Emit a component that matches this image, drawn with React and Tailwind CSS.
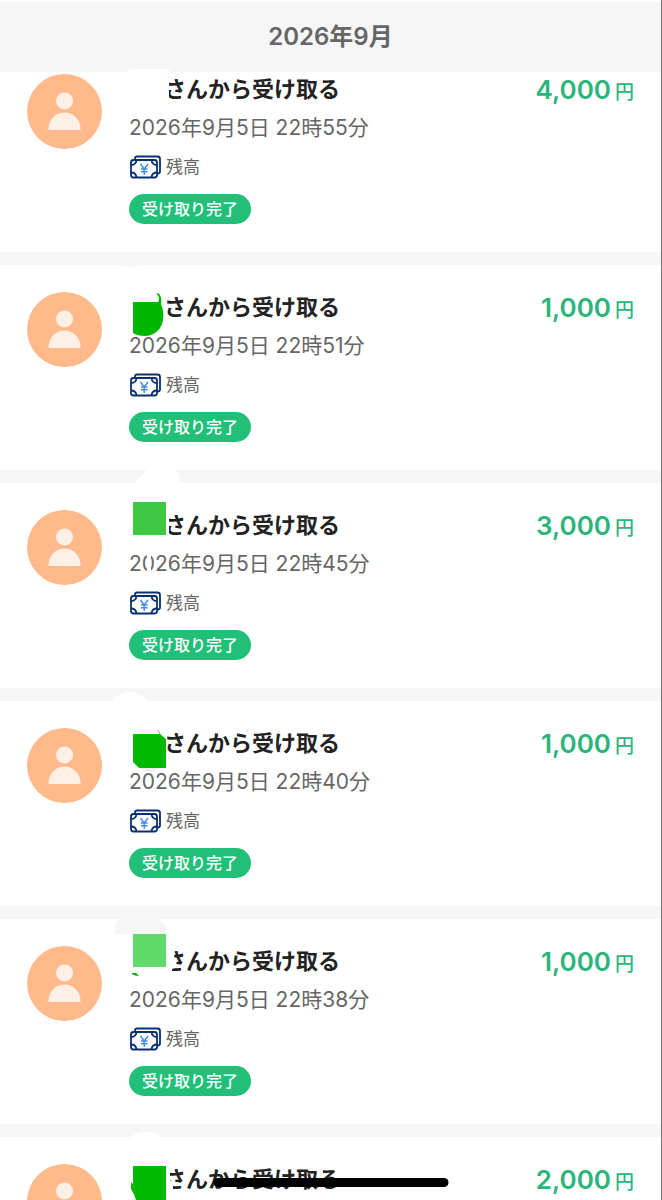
const transactions = [
  { id: 1, date: "2026年9月5日 22時55分", amount: "4,000" },
  { id: 2, date: "2026年9月5日 22時51分", amount: "1,000" },
  { id: 3, date: "2026年9月5日 22時45分", amount: "3,000" },
  { id: 4, date: "2026年9月5日 22時40分", amount: "1,000" },
  { id: 5, date: "2026年9月5日 22時38分", amount: "1,000" },
  { id: 6, date: "2026年9月5日 22時31分", amount: "2,000" },
];

// Marks that hide the sender's name, one drawing per row
const nameMasks = {
  1: (
    <g fill="#fff">
      <path d="M18 46 V43 Q20 42 26 42 H56 Q60 42 60 46Z" />
      <rect x="50" y="49" width="9" height="28" />
    </g>
  ),
  2: (
    <>
      <path d="M9 20 H31 Q28 23 20 23 Q12 23 9 20Z" fill="#f9f9f9" />
      <path
        d="M23 57 H48 C50 54 49 51 46 48 C51 48 52 54 51 59 C54 65 54 74 52 79 C49 87 42 91 35 91 C30 91 26 90 23 88Z"
        fill="#00b500"
      />
    </>
  ),
  3: (
    <>
      <path d="M24 20 C32 16 34 2 49 3 C64 1 72 10 69 20Z" fill="#fff" />
      <rect x="50" y="48" width="9" height="28" fill="#fff" />
      <rect x="23" y="39" width="33" height="33" fill="#3ec740" />
      <path d="M37 92 H41 V111 H37Z" fill="#fff" />
    </>
  ),
  4: (
    <>
      <path d="M2 20 C9 12 14 11 20 11 C28 11 33 15 38 20Z" fill="#fff" />
      <path d="M29 86 H49 Q46 91 39 91 Q32 90 29 86Z" fill="#eee" />
      <path d="M48 49 L50 53" stroke="#999" />
      <path d="M23 53 H50 L56 58 V87 H29 L23 81Z" fill="#00b800" />
    </>
  ),
  5: (
    <>
      <path d="M5 35 V27 Q7 20 13 20 H47 Q57 24 57 35Z" fill="#f6f6f6" />
      <path d="M50 48 H62 L65 60 L67 62 L65 69 L62 70 V77 H50Z" fill="#fff" />
      <rect x="23" y="35" width="33" height="33" fill="#60da6a" />
      <path d="M22 74 H26 L29 77 Q25 77 22 75Z" fill="#0aa30a" />
    </>
  ),
  6: (
    <>
      <path d="M21 20 Q28 15 36 15 Q45 15 50 20Z" fill="#fff" />
      <path d="M50 48 H60 V63 L63 65 V76 H50Z" fill="#fff" />
      <path d="M23 49 H56 V83 H26 Q24 76 21 72 V65 L23 67Z" fill="#00b900" />
    </>
  ),
};

const Avatar = () => (
  <svg viewBox="0 0 75 75" className="w-[75px] h-[75px] shrink-0">
    <circle cx="37.5" cy="37.5" r="37.5" fill="#ffb98b" />
    <circle cx="37.5" cy="27" r="8.5" fill="#fff0e6" />
    <path d="M21.5 56 V54 C22 45 29 38.5 37.5 38.5 C46 38.5 53 45 53.5 54 V56Z" fill="#fff0e6" />
  </svg>
);

const BalanceIcon = () => (
  <svg viewBox="0 0 32 24" fill="none" stroke="#08306f" strokeWidth="1.8" className="w-8 h-6 shrink-0">
    <path d="M6 5 V3.5 Q6 1.5 8 1.5 H28.5 Q31 1.5 31 4 V16.5 Q31 18.5 28.5 18.5 H28" />
    <rect x="2" y="5" width="26" height="17.5" rx="2.5" />
    <path d="M2 10 Q7 10 7.5 5 M22.5 5 Q23 10 28 10 M2 17.5 Q7 17.5 7.5 22.5 M22.5 22.5 Q23 17.5 28 17.5" />
    <path d="M11.5 9 L15.2 14 L19 9 M15.2 14 V20 M12 14 H18.5 M12 16.8 H18.5" stroke="#3f8cf0" strokeWidth="1.4" />
  </svg>
);

const Transaction = ({ id, date, amount }) => (
  <li className="relative flex gap-[27px] bg-white px-[27px] pt-[27px] pb-7">
    <Avatar />
    <div className="flex-1 min-w-0 flex flex-col items-start">
      <div className="w-full h-[30px] flex justify-between">
        <h2 className="pl-[35px] text-[22px] leading-[30px] font-bold text-[#222]">さんから受け取る</h2>
        <p className="flex items-baseline gap-1 text-[26px] leading-8 font-semibold text-[#2bb57b]">
          {amount}
          <span className="text-[19px] font-medium">円</span>
        </p>
      </div>
      <time className="mt-[9px] text-[21px] leading-[30px] text-[#666]">{date}</time>
      <div className="mt-3 flex h-6 items-center gap-[5px] text-[17px] leading-6 text-[#666]">
        <BalanceIcon />
        <span>残高</span>
      </div>
      <span className="mt-[15px] h-[30px] rounded-full bg-[#22bf78] px-[13px] text-[16px] leading-[30px] font-medium text-white">
        受け取り完了
      </span>
    </div>
    <svg viewBox="0 0 80 120" className="absolute z-20 left-[110px] -top-5 w-20 h-[120px]">
      {nameMasks[id]}
    </svg>
  </li>
);

export default function App() {
  return (
    <div className="relative h-screen overflow-hidden bg-[#f6f6f6] border-r border-[#777] font-['Inter','Noto_Sans_CJK_JP',sans-serif]">
      <header className="relative z-10 h-[72px] border-t-2 border-white bg-[#f6f6f6] flex items-center justify-center">
        <h1 className="text-[24px] leading-8 font-semibold text-[#666]">2026年9月</h1>
      </header>

      {/* First row slides under the header */}
      <ul className="-mt-[25px] flex flex-col gap-[13px]">
        {transactions.map((item) => (
          <Transaction key={item.id} {...item} />
        ))}
      </ul>

      {/* Home indicator */}
      <div className="absolute z-30 bottom-[13px] left-1/2 -translate-x-1/2 w-[235px] h-[9px] rounded-full bg-black" />
    </div>
  );
}
